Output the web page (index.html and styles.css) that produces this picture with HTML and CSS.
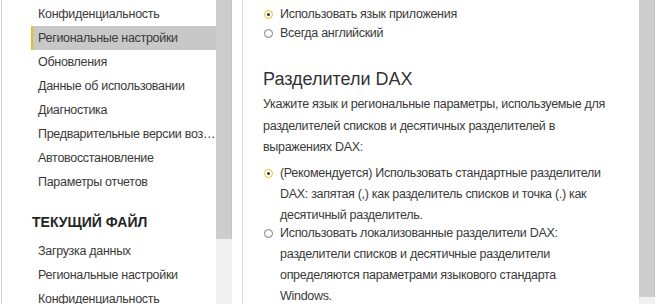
FILE: index.html
```html
<!DOCTYPE html>
<html lang="ru">
<head>
    <meta charset="UTF-8">
    <title>Параметры</title>
    <link rel="stylesheet" href="styles.css">
</head>
<body>
<div class="window">
    <div class="sidebar">
        <div class="nav">
            <ul class="nav-list">
                <li>Конфиденциальность</li>
                <li class="active">Региональные настройки</li>
                <li>Обновления</li>
                <li>Данные об использовании</li>
                <li>Диагностика</li>
                <li>Предварительные версии возможностей</li>
                <li>Автовосстановление</li>
                <li>Параметры отчетов</li>
            </ul>
            <h3 class="nav-title">ТЕКУЩИЙ ФАЙЛ</h3>
            <ul class="nav-list">
                <li>Загрузка данных</li>
                <li>Региональные настройки</li>
                <li>Конфиденциальность</li>
            </ul>
        </div>
        <div class="scrollbar side-scroll"><div class="thumb"></div></div>
    </div>
    <div class="content">
        <div class="pane">
            <div class="radio-group compact">
                <label class="radio checked"><span class="dot"></span><span>Использовать язык приложения</span></label>
                <label class="radio"><span class="dot"></span><span>Всегда английский</span></label>
            </div>

            <h2 class="section-title">Разделители DAX</h2>
            <p class="desc">Укажите язык и региональные параметры, используемые для разделителей списков и десятичных разделителей в выражениях DAX:</p>

            <div class="radio-group">
                <label class="radio checked"><span class="dot"></span><span>(Рекомендуется) Использовать стандартные разделители DAX: запятая (,) как разделитель списков и точка (.) как десятичный разделитель.</span></label>
                <label class="radio"><span class="dot"></span><span>Использовать локализованные разделители DAX: разделители списков и десятичные разделители определяются параметрами языкового стандарта Windows.</span></label>
            </div>
        </div>
        <div class="scrollbar main-scroll"><div class="thumb"></div></div>
    </div>
</div>
</body>
</html>
```

FILE: styles.css
```css
html, body {
    margin: 0;
    padding: 0;
    background: #ffffff;
}

body {
    font-family: "Liberation Sans", Arial, sans-serif;
    font-size: 12.5px;
    letter-spacing: -0.3px;
    color: #3a3a3a;
    overflow: hidden;
}

.window {
    display: flex;
    height: 304px;
    padding-left: 1px;
}

.sidebar {
    display: flex;
    width: 240px;
    border-left: 1px solid #cfcfcf;
    border-right: 1px solid #dedede;
}

.nav {
    width: 185px;
    padding-left: 29px;
    padding-top: 3px;
}

.nav-list {
    list-style: none;
    margin: 0;
    padding: 0;
}

.nav-list li {
    height: 24px;
    line-height: 24px;
    padding-left: 5px;
    border-left: 2px solid transparent;
    white-space: nowrap;
    overflow: hidden;
    text-overflow: ellipsis;
}

.nav-list li:first-child {
    margin-top: -1px;
}

.nav-list li.active {
    background: #c8c8c8;
    border-left-color: #e8c21a;
}

.nav-title {
    margin: 17px 0 7px 1px;
    font-size: 14px;
    letter-spacing: 0;
    line-height: 22px;
    font-weight: 700;
    color: #252525;
}

.scrollbar {
    display: flex;
    flex-direction: column;
    width: 16px;
    background: #f0f0f0;
}

.scrollbar .thumb {
    background: #cdcdcd;
    border-right: 1px solid #c3c3c3;
}

.side-scroll {
    margin-right: 10px;
}

.side-scroll .thumb {
    height: 239px;
}

.main-scroll {
    margin-right: 5px;
}

.main-scroll .thumb {
    height: 297px;
}

.content {
    display: flex;
    flex: 1;
}

.pane {
    flex: 1;
    padding: 5px 0 0 20px;
}

.radio-group {
    display: flex;
    flex-direction: column;
    width: 342px;
}

.radio {
    display: flex;
    align-items: flex-start;
    gap: 7px;
    line-height: 21px;
    margin-bottom: -3px;
}

.compact .radio {
    line-height: 19px;
    margin-bottom: 0;
}

.radio .dot {
    flex: none;
    width: 7px;
    height: 7px;
    margin-top: 6px;
    margin-left: 1px;
    border: 1px solid #7a7a7a;
    border-radius: 50%;
    background: #fff;
    position: relative;
}

.compact .radio .dot {
    margin-top: 5px;
}

.radio.checked .dot {
    border-color: #e8c21a;
}

.radio.checked .dot::after {
    content: '';
    position: absolute;
    top: 2px;
    left: 2px;
    width: 3px;
    height: 3px;
    border-radius: 50%;
    background: #333;
}

.section-title {
    margin: 23px 0 0;
    font-size: 18px;
    font-weight: 400;
    letter-spacing: 0;
    line-height: 26px;
    color: #333;
}

.desc {
    width: 350px;
    margin: 2px 0 4px;
    line-height: 21.5px;
}
```
